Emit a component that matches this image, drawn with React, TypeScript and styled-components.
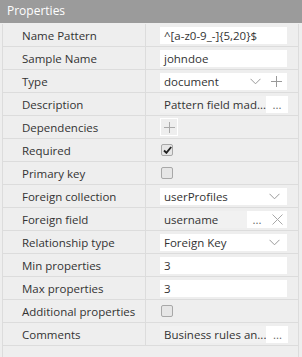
import React from 'react';
import styled, { createGlobalStyle } from 'styled-components';

const GlobalStyle = createGlobalStyle`
  html, body {
    margin: 0;
    padding: 0;
    background: #eeeeee;
  }
  body {
    font-family: 'Open Sans', 'Liberation Sans', sans-serif;
    font-size: 11.5px;
    color: #333333;
  }
`;

const Panel = styled.div`
  width: 302px;
  height: 357px;
  overflow: hidden;
  background: #eeeeee;
`;

const Header = styled.div`
  height: 23px;
  line-height: 22px;
  background: #9b9b9b;
  color: #ffffff;
  padding-left: 7px;
  font-size: 12px;
`;

const Table = styled.div`
  margin: 1px 3px 0 2px;
  border-left: 1px solid #dcdcdc;
  border-right: 1px solid #dcdcdc;
`;

const Row = styled.div`
  display: grid;
  grid-template-columns: 143px 1fr;
  height: 22px;
  border-bottom: 1px solid #dcdcdc;
`;

const Filler = styled.div`
  height: 20px;
`;

const Label = styled.div`
  display: flex;
  align-items: center;
  padding-left: 19px;
  border-right: 1px solid #dcdcdc;
  white-space: nowrap;
`;

const Cell = styled.div`
  display: flex;
  align-items: center;
  padding: 0 11px 0 14px;
`;

const Input = styled.div`
  flex: 1;
  height: 17px;
  display: flex;
  align-items: center;
  background: #ffffff;
  overflow: hidden;
  white-space: nowrap;
`;

const Text = styled.span<{ $grey?: boolean }>`
  flex: 1;
  height: 100%;
  display: flex;
  align-items: center;
  padding-left: 4px;
  background: ${(p) => (p.$grey ? '#f1f1f1' : 'transparent')};
  overflow: hidden;
`;

const Side = styled.span<{ $w: number }>`
  width: ${(p) => p.$w}px;
  display: flex;
  align-items: center;
  justify-content: center;
  color: #666666;
  flex: none;
`;

const AddBox = styled.div`
  width: 18px;
  height: 18px;
  box-sizing: border-box;
  border: 1px solid #ffffff;
  display: flex;
  align-items: center;
  justify-content: center;
`;

const Check = styled.div`
  width: 10px;
  height: 10px;
  margin-left: 1px;
  border: 1px solid #a8a8a8;
  border-radius: 2px;
  background: #e6e6e6;
  display: flex;
  align-items: center;
  justify-content: center;
`;

const Chevron = () => (
  <svg width="11" height="7" viewBox="0 0 11 7">
    <path d="M0.5 0.8 L5.5 5.8 L10.5 0.8" fill="none" stroke="#999" strokeWidth="1" />
  </svg>
);

const Plus = ({ color = '#999' }: { color?: string }) => (
  <svg width="11" height="11" viewBox="0 0 11 11">
    <path d="M5.5 0 V11 M0 5.5 H11" stroke={color} strokeWidth="1" />
  </svg>
);

const Cross = () => (
  <svg width="11" height="11" viewBox="0 0 11 11">
    <path d="M0.5 0.5 L10.5 10.5 M10.5 0.5 L0.5 10.5" stroke="#a8a8a8" strokeWidth="1" />
  </svg>
);

const Tick = () => (
  <svg width="9" height="8" viewBox="0 0 9 8">
    <path d="M1 4.5 L3.4 6.8 L8.2 1" fill="none" stroke="#222" strokeWidth="1.9" />
  </svg>
);

const TextRow = ({ label, value }: { label: string; value: string }) => (
  <Row>
    <Label>{label}</Label>
    <Cell>
      <Input>
        <Text>{value}</Text>
      </Input>
    </Cell>
  </Row>
);

const SelectRow = ({ label, value, plus }: { label: string; value: string; plus?: boolean }) => (
  <Row>
    <Label>{label}</Label>
    <Cell>
      <Input>
        <Text>{value}</Text>
        <Side $w={plus ? 20 : 26}>
          <Chevron />
        </Side>
        {plus && (
          <Side $w={22}>
            <Plus />
          </Side>
        )}
      </Input>
    </Cell>
  </Row>
);

const PopupRow = ({ label, value }: { label: string; value: string }) => (
  <Row>
    <Label>{label}</Label>
    <Cell>
      <Input>
        <Text $grey>{value}</Text>
        <Side $w={22}>...</Side>
      </Input>
    </Cell>
  </Row>
);

const CheckRow = ({ label, on }: { label: string; on?: boolean }) => (
  <Row>
    <Label>{label}</Label>
    <Cell>
      <Check>{on && <Tick />}</Check>
    </Cell>
  </Row>
);

export default function App() {
  return (
    <Panel>
      <GlobalStyle />
      <Header>Properties</Header>
      <Table>
        <TextRow label="Name Pattern" value="^[a-z0-9_-]{5,20}$" />
        <TextRow label="Sample Name" value="johndoe" />
        <SelectRow label="Type" value="document" plus />
        <PopupRow label="Description" value="Pattern field mad..." />
        <Row>
          <Label>Dependencies</Label>
          <Cell>
            <AddBox>
              <Plus color="#aaa" />
            </AddBox>
          </Cell>
        </Row>
        <CheckRow label="Required" on />
        <CheckRow label="Primary key" />
        <SelectRow label="Foreign collection" value="userProfiles" />
        <Row>
          <Label>Foreign field</Label>
          <Cell>
            <Input>
              <Text $grey>username</Text>
              <Side $w={20}>...</Side>
              <Side $w={20}>
                <Cross />
              </Side>
            </Input>
          </Cell>
        </Row>
        <SelectRow label="Relationship type" value="Foreign Key" />
        <TextRow label="Min properties" value="3" />
        <TextRow label="Max properties" value="3" />
        <CheckRow label="Additional properties" />
        <PopupRow label="Comments" value="Business rules an..." />
        <Filler />
      </Table>
    </Panel>
  );
}
